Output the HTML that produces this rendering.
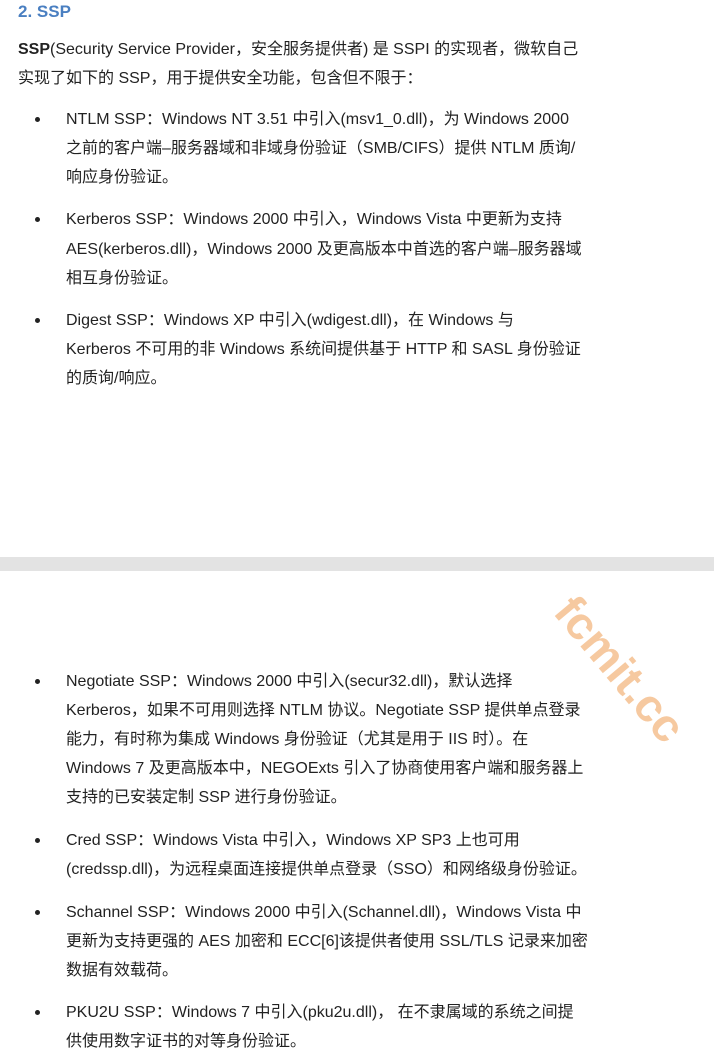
<!DOCTYPE html>
<html><head><meta charset="utf-8"><style>
body{margin:0;width:714px;height:1056px;background:#fff;position:relative;overflow:hidden;font-family:"Liberation Sans","Noto Sans CJK SC",sans-serif;color:#222;}
.l{position:absolute;height:20px;line-height:20px;font-size:16px;white-space:nowrap;letter-spacing:0px}
.d{position:absolute;left:35px;width:5px;height:5px;border-radius:50%;background:#222}
.band{position:absolute;left:0;top:557px;width:714px;height:14px;background:#e3e3e3}
.wm{position:absolute;left:585px;top:585px;font-size:46px;font-weight:bold;color:#f6c9a0;transform:rotate(50deg);transform-origin:left top;white-space:nowrap;font-family:"Liberation Sans",sans-serif}
</style></head><body>
<div class="l" style="left:18px;top:2px;font-size:17px;font-weight:bold;color:#4a7fc1">2. SSP</div>
<div class="l" style="left:18px;top:40px"><b>SSP</b>(Security Service Provider，安全服务提供者) 是 SSPI 的实现者，微软自己</div>
<div class="l" style="left:18px;top:69px">实现了如下的 SSP，用于提供安全功能，包含但不限于：</div>

<div class="d" style="top:117px"></div>
<div class="l" style="left:66px;top:110px">NTLM SSP：Windows NT 3.51 中引入(msv1_0.dll)，为 Windows 2000</div>
<div class="l" style="left:66px;top:139px">之前的客户端–服务器域和非域身份验证（SMB/CIFS）提供 NTLM 质询/</div>
<div class="l" style="left:66px;top:168px">响应身份验证。</div>

<div class="d" style="top:217px"></div>
<div class="l" style="left:66px;top:210px">Kerberos SSP：Windows 2000 中引入，Windows Vista 中更新为支持</div>
<div class="l" style="left:66px;top:240px">AES(kerberos.dll)，Windows 2000 及更高版本中首选的客户端–服务器域</div>
<div class="l" style="left:66px;top:269px">相互身份验证。</div>

<div class="d" style="top:318px"></div>
<div class="l" style="left:66px;top:311px">Digest SSP：Windows XP 中引入(wdigest.dll)，在 Windows 与</div>
<div class="l" style="left:66px;top:340px">Kerberos 不可用的非 Windows 系统间提供基于 HTTP 和 SASL 身份验证</div>
<div class="l" style="left:66px;top:369px">的质询/响应。</div>

<div class="band"></div>
<div class="wm">fcmit.cc</div>

<div class="d" style="top:679px"></div>
<div class="l" style="left:66px;top:672px">Negotiate SSP：Windows 2000 中引入(secur32.dll)，默认选择</div>
<div class="l" style="left:66px;top:701px">Kerberos，如果不可用则选择 NTLM 协议。Negotiate SSP 提供单点登录</div>
<div class="l" style="left:66px;top:730px">能力，有时称为集成 Windows 身份验证（尤其是用于 IIS 时）。在</div>
<div class="l" style="left:66px;top:759px">Windows 7 及更高版本中，NEGOExts 引入了协商使用客户端和服务器上</div>
<div class="l" style="left:66px;top:788px">支持的已安装定制 SSP 进行身份验证。</div>

<div class="d" style="top:838px"></div>
<div class="l" style="left:66px;top:831px">Cred SSP：Windows Vista 中引入，Windows XP SP3 上也可用</div>
<div class="l" style="left:66px;top:860px">(credssp.dll)，为远程桌面连接提供单点登录（SSO）和网络级身份验证。</div>

<div class="d" style="top:910px"></div>
<div class="l" style="left:66px;top:903px">Schannel SSP：Windows 2000 中引入(Schannel.dll)，Windows Vista 中</div>
<div class="l" style="left:66px;top:932px">更新为支持更强的 AES 加密和 ECC[6]该提供者使用 SSL/TLS 记录来加密</div>
<div class="l" style="left:66px;top:961px">数据有效载荷。</div>

<div class="d" style="top:1010px"></div>
<div class="l" style="left:66px;top:1003px">PKU2U SSP：Windows 7 中引入(pku2u.dll)， 在不隶属域的系统之间提</div>
<div class="l" style="left:66px;top:1032px">供使用数字证书的对等身份验证。</div>
</body></html>
